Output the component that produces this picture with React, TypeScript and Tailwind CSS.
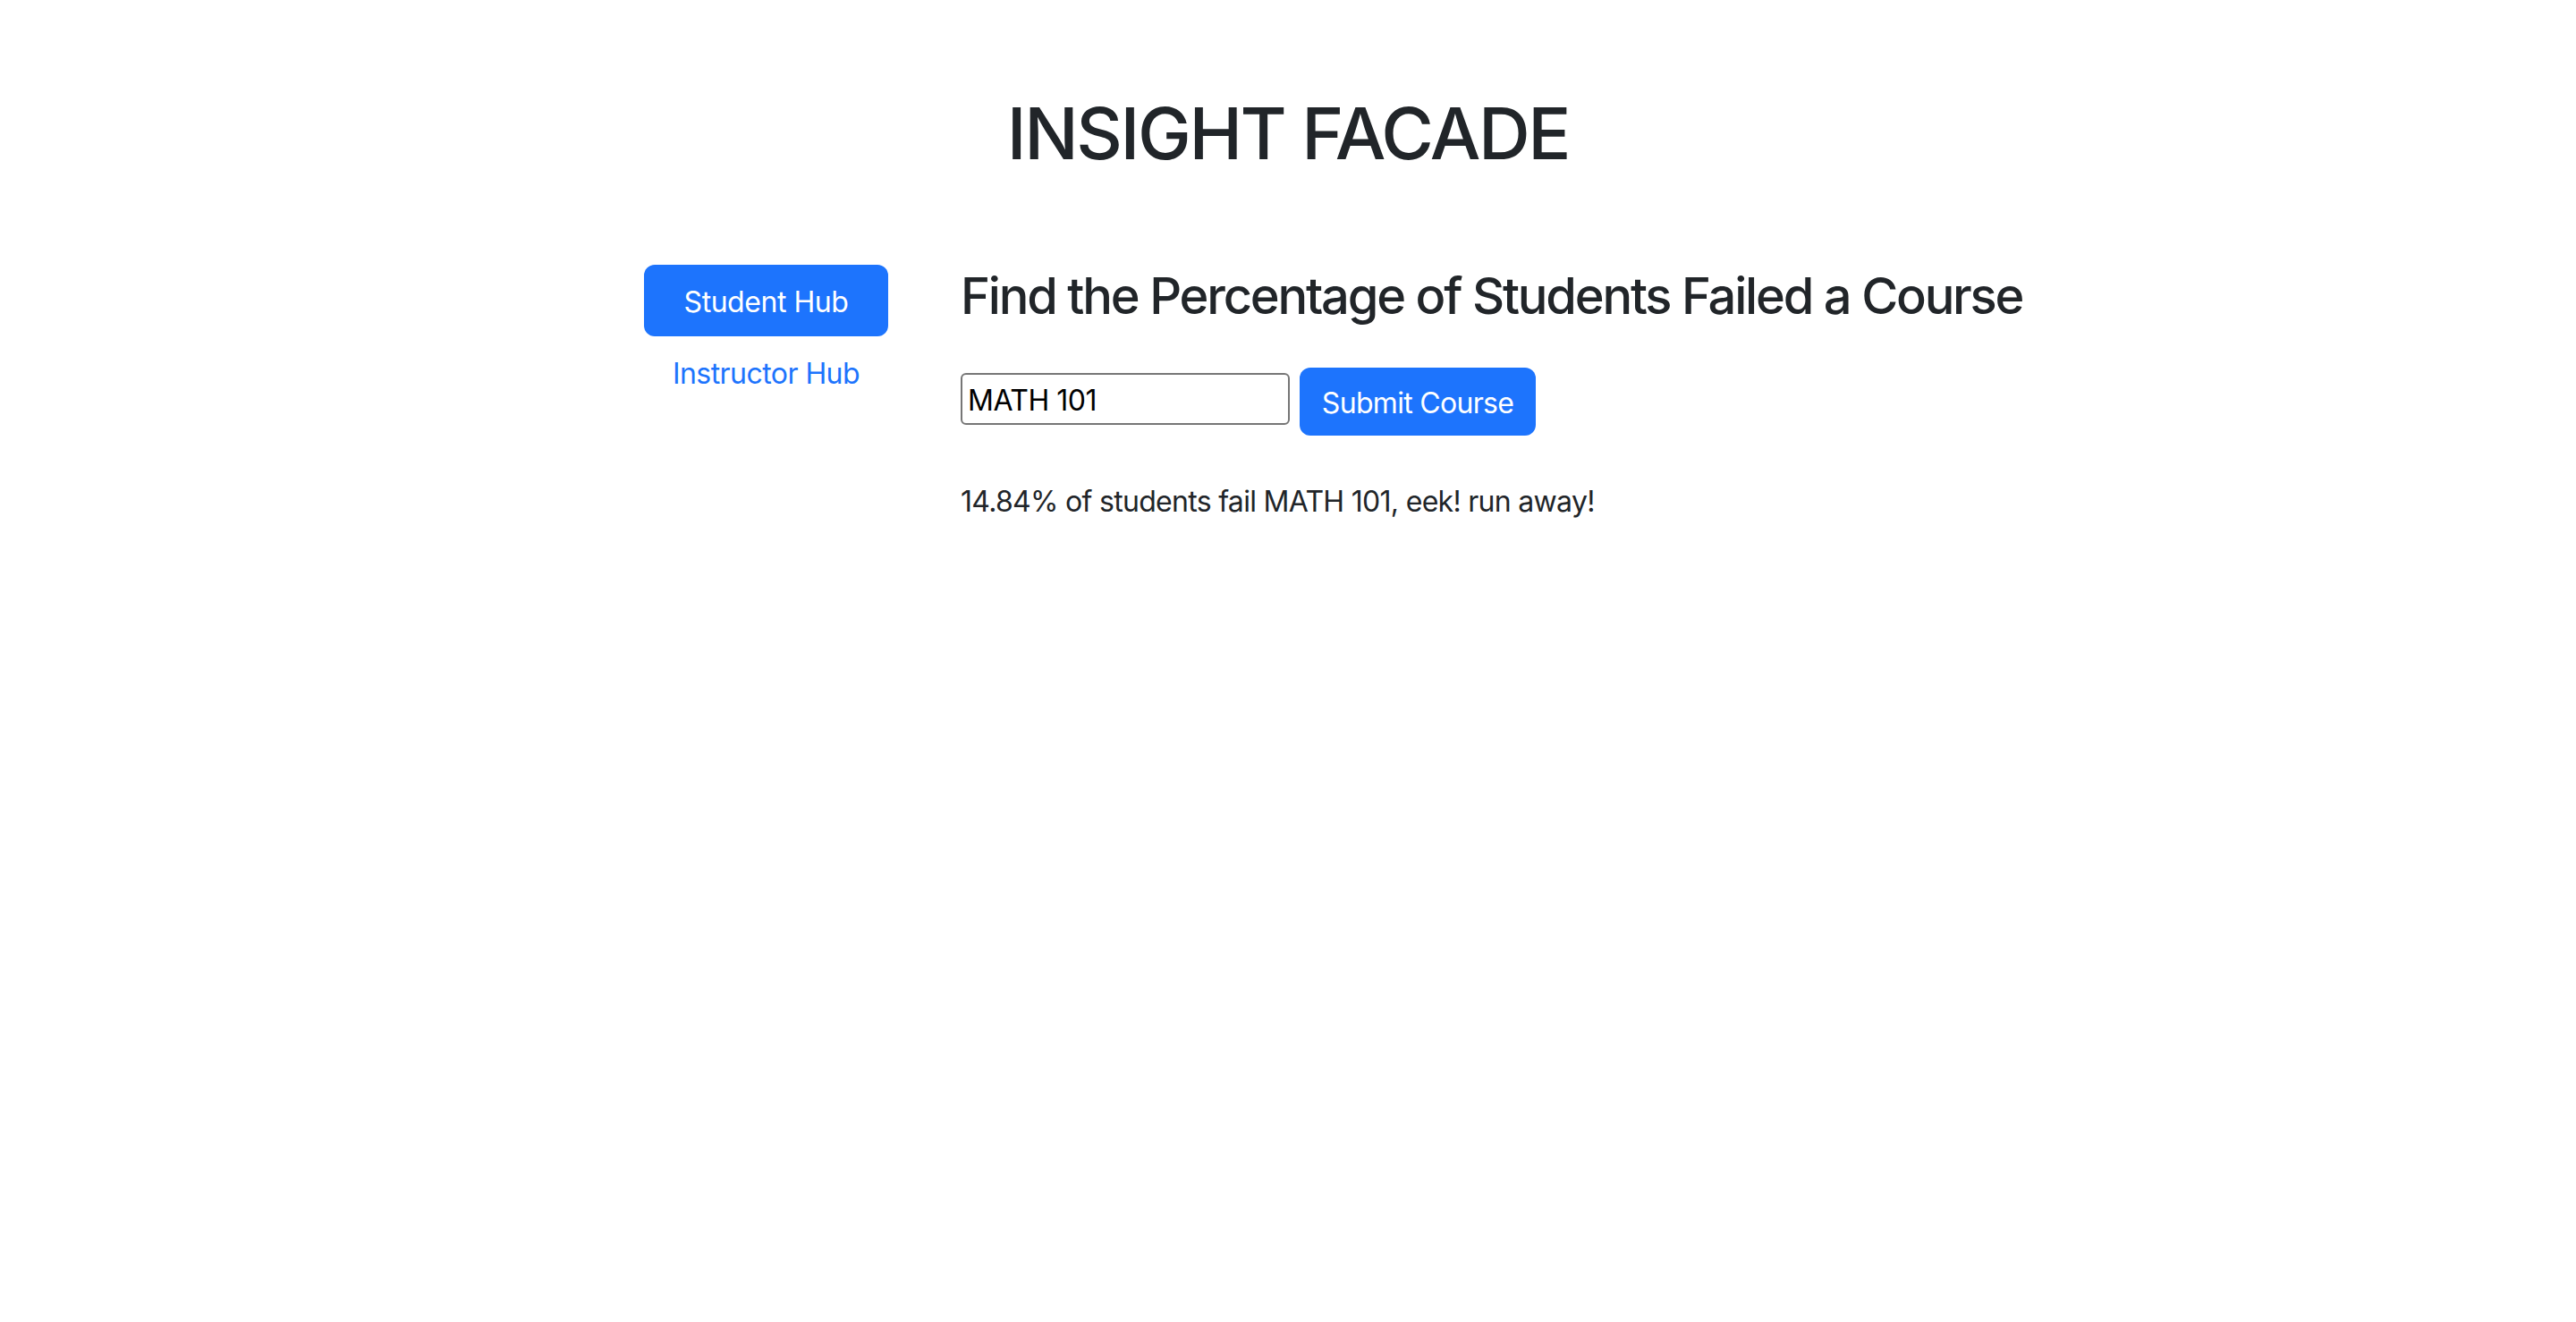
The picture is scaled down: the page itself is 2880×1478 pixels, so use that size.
import React, { useState } from 'react';

export default function App() {
  const [course, setCourse] = useState('MATH 101');

  return (
    <div className="min-h-screen bg-white text-[#212529] font-['Inter','Liberation_Sans',sans-serif]">
      <h1 className="pt-[101px] text-center text-[80px] font-medium leading-[1.2] tracking-[-2.4px]">INSIGHT FACADE</h1>

      <div className="mx-auto mt-[99px] flex w-[1440px]">
        <aside className="flex w-[273px] shrink-0 flex-col items-center">
          <button className="h-[80px] w-full rounded-[12px] bg-[#1d74fd] pt-[3px] text-[32px] leading-[1.5] tracking-[-0.45px] text-white">
            Student Hub
          </button>
          <a href="#" className="mt-[18px] text-[32px] leading-[1.5] tracking-[-0.55px] text-[#1d74fd]">
            Instructor Hub
          </a>
        </aside>

        <main className="ml-[81px] whitespace-nowrap">
          <h3 className="pt-[2px] text-[56px] font-medium leading-[1.2] tracking-[-2.2px]">
            Find the Percentage of Students Failed a Course
          </h3>

          <div className="mt-[46px] flex items-start">
            <input
              className="mt-[6px] h-[58px] w-[368px] rounded-[6px] border-2 border-[#767676] px-[6px] pt-[2px] text-[32px] tracking-[-0.5px] text-black outline-none"
              value={course}
              onChange={(e) => setCourse(e.target.value)}
            />
            <button className="ml-[11px] h-[76px] w-[264px] rounded-[12px] bg-[#1d74fd] pt-[3px] text-[32px] leading-[1.5] tracking-[-0.7px] text-white">
              Submit Course
            </button>
          </div>

          <p className="mt-[50px] text-[32px] leading-[1.5] tracking-[-0.7px]">
            14.84% of students fail {course}, eek! run away!
          </p>
        </main>
      </div>
    </div>
  );
}
